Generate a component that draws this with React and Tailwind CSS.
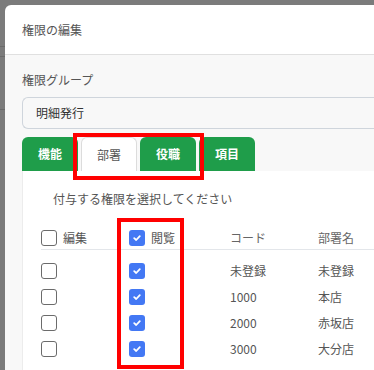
import React from 'react';

const font = { fontFamily: '"Noto Sans CJK JP", "Noto Sans", sans-serif' };

const rows = [
  { code: '未登録', name: '未登録' },
  { code: '1000', name: '本店' },
  { code: '2000', name: '赤坂店' },
  { code: '3000', name: '大分店' },
];

const Box = ({ checked }) =>
  checked ? (
    <span className="w-[16px] h-[16px] rounded-[3px] bg-[#4378f4] flex items-center justify-center shrink-0">
      <svg width="10" height="10" viewBox="0 0 10 10">
        <path d="M2.2 5.2 L4.2 7 L7.8 3.2" fill="none" stroke="#fff" strokeWidth="1.8" strokeLinecap="round" strokeLinejoin="round" />
      </svg>
    </span>
  ) : (
    <span className="block w-[16px] h-[16px] rounded-[3px] border border-[#6b6b6b] bg-white shrink-0" />
  );

const Tab = ({ label, active }) =>
  active ? (
    <div className="w-[56px] h-[34px] rounded-t-[6px] bg-white border border-b-0 border-[#dcdcdc] flex items-center justify-center text-[12px] text-[#555]">
      {label}
    </div>
  ) : (
    <div className="w-[56px] h-[34px] rounded-t-[6px] bg-[#1f9d4a] flex items-center justify-center text-[12px] font-bold text-white">
      {label}
    </div>
  );

export default function App() {
  return (
    <div className="w-[374px] h-[370px] overflow-hidden bg-[#7b7b7b] flex relative" style={font}>
      {/* page behind the overlay */}
      <div className="w-[5px] shrink-0 flex flex-col">
        <div className="h-[47px] border-b border-[#6a6a6a]" />
        <div className="h-[10px] border-b border-[#6a6a6a]" />
        <div className="h-[53px] border-b border-[#6a6a6a]" />
      </div>

      <div className="flex-1 pt-[5px] flex flex-col">
        <div className="flex-1 bg-white rounded-tl-[6px] flex flex-col overflow-hidden">
          <div className="h-[50px] px-[17px] flex items-center border-b border-[#e0e0e0] text-[12px] text-[#555]">
            権限の編集
          </div>

          <div className="flex-1 bg-[#f8f8f8] pt-[16px] pl-[17px] flex flex-col">
            <div className="h-[18px] leading-[18px] text-[12px] text-[#555]">権限グループ</div>
            <div className="mt-[8px] h-[32px] rounded-l-[6px] border border-r-0 border-[#cfd5dc] bg-[#f8f8f8] px-[13px] flex items-center text-[12px] text-[#333]">
              明細発行
            </div>

            <div className="mt-[8px] flex gap-[3px]">
              <Tab label="機能" />
              <Tab label="部署" active />
              <Tab label="役職" />
              <Tab label="項目" />
            </div>

            <div className="flex-1 bg-white border-l border-[#ececec] pt-[19px] pl-[18px]">
              <div className="pl-[12px] h-[18px] leading-[18px] text-[12px] text-[#555]">
                付与する権限を選択してください
              </div>

              <div className="mt-[18px] h-[24px] flex items-center border-b border-[#e3e6ea] text-[12px] text-[#555]">
                <div className="w-[88px] flex items-center gap-[6px]">
                  <Box />
                  <span>編集</span>
                </div>
                <div className="w-[101px] flex items-center gap-[6px]">
                  <Box checked />
                  <span>閲覧</span>
                </div>
                <div className="w-[88px] text-[#666]">コード</div>
                <div className="text-[#666]">部署名</div>
              </div>

              <div className="mt-[8px] flex flex-col">
                {rows.map((r) => (
                  <div key={r.code} className="h-[26px] flex items-center text-[12px] text-[#555]">
                    <div className="w-[88px]">
                      <Box />
                    </div>
                    <div className="w-[101px]">
                      <Box checked />
                    </div>
                    <div className="w-[88px]">{r.code}</div>
                    <div>{r.name}</div>
                  </div>
                ))}
              </div>
            </div>
          </div>
        </div>
      </div>

      {/* annotation boxes */}
      <div className="absolute left-[73px] top-[133px] w-[131px] h-[47px] border-[4px] border-[#ff0000]" />
      <div className="absolute left-[117px] top-[218px] w-[67px] h-[151px] border-[4px] border-[#ff0000]" />
    </div>
  );
}
